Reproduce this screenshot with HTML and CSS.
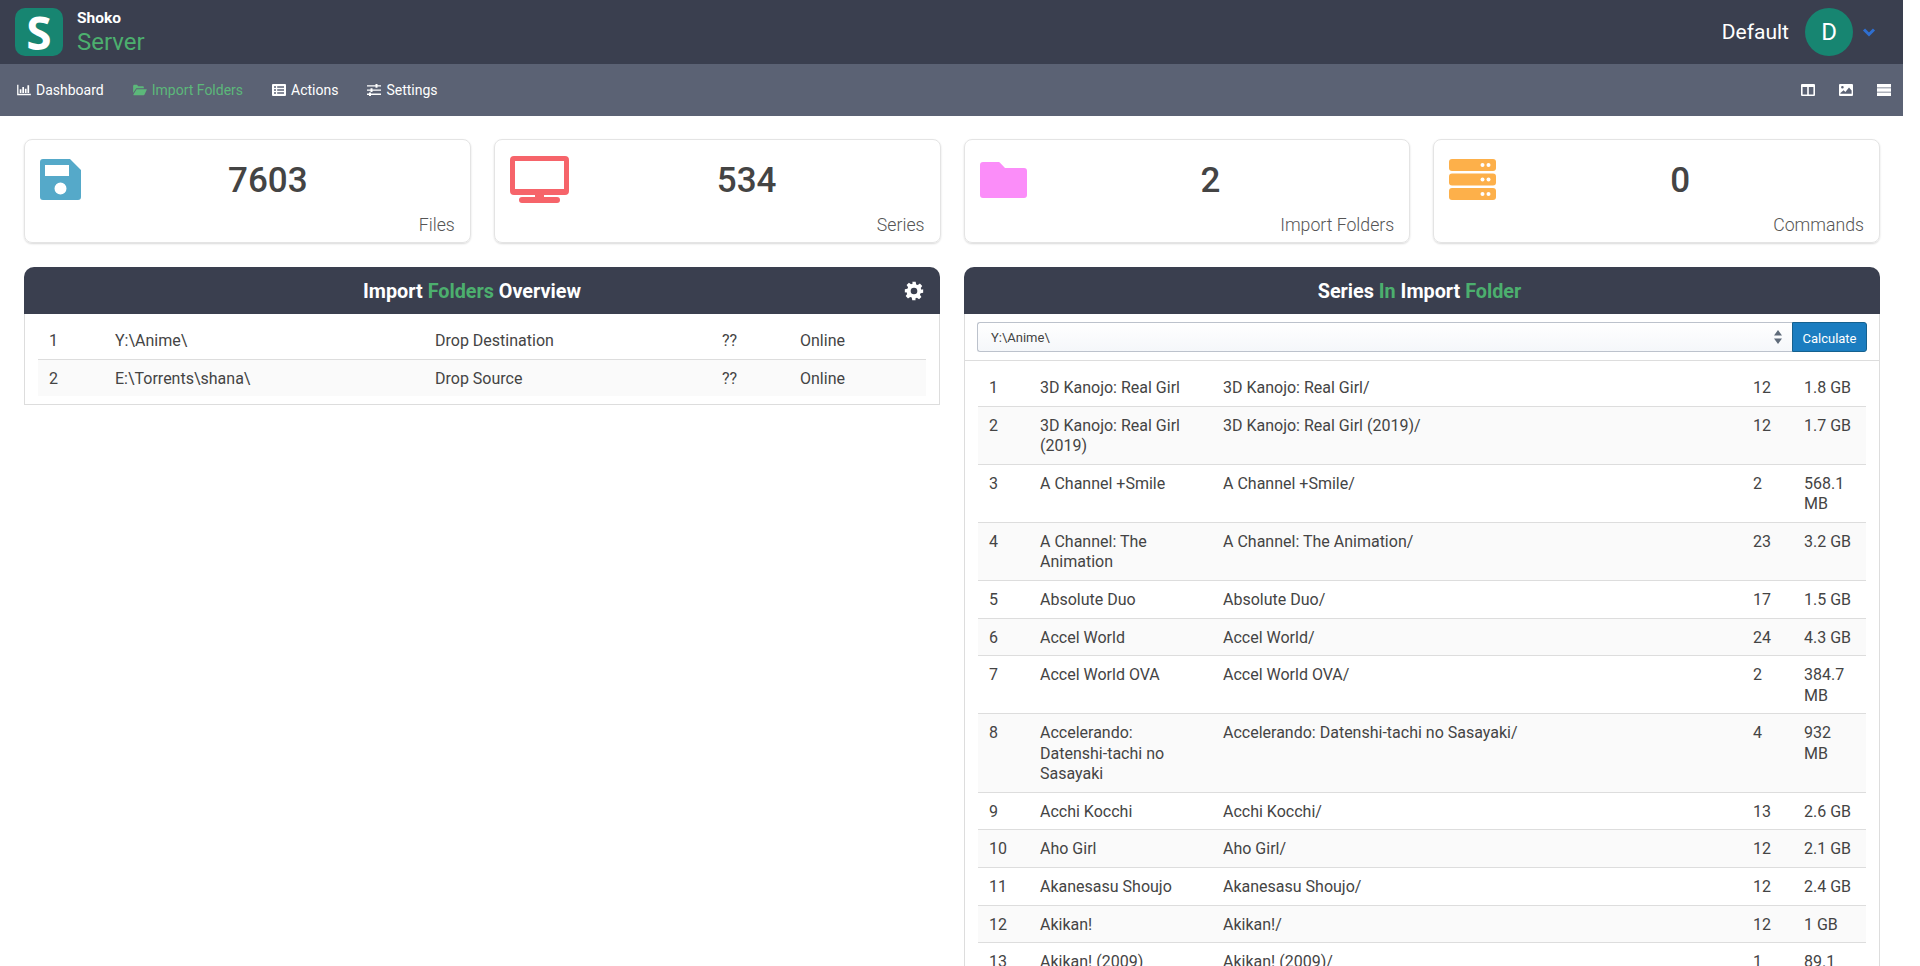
FILE: index.html
```html
<!DOCTYPE html>
<html>
<head>
    <title>Shoko Server</title>
    <link rel="stylesheet" href="styles.css">
</head>
<body>
    <div class="page">
        <header class="topbar">
            <div class="logo">S</div>
            <div class="brand">
                <div class="brand-top">Shoko</div>
                <div class="brand-bottom">Server</div>
            </div>
            <div class="user">
                <span class="user-name">Default</span>
                <span class="avatar">D</span>
                <svg class="chevron" viewBox="0 0 14 10"><path d="M2 2.5l5 5 5-5" fill="none" stroke="#2f6fd0" stroke-width="3"/></svg>
            </div>
        </header>

        <nav class="subnav">
            <a class="nav-item"><svg class="nav-icon" viewBox="0 0 16 14"><path d="M0 1h1.5v10.5H16V13H0z" fill="#fff"/><path d="M3 6h2v4.5H3zM6 3.5h2v7H6zM9 5.5h2v5H9zM12 1.5h2v9h-2z" fill="#fff"/></svg>Dashboard</a>
            <a class="nav-item active"><svg class="nav-icon" viewBox="0 0 16 14"><path d="M0 2.5C0 1.700.6 1 1.400 1h3.200l1.200 1.500h5.400c.7 0 1.300.6 1.300 1.300V5H3.600L0 10.500z" fill="#5cb87a"/><path d="M4 6h11.400c.5 0 .7.4.5.8l-2.600 5.400c-.2.4-.6.8-1.100.8H.8c-.5 0-.7-.4-.5-.8z" fill="#5cb87a"/></svg>Import Folders</a>
            <a class="nav-item"><svg class="nav-icon" viewBox="0 0 14 12"><path fill-rule="evenodd" d="M1 0h12a1 1 0 011 1v10a1 1 0 01-1 1H1a1 1 0 01-1-1V1a1 1 0 011-1zm1 2.200v1.600h2V2.200zm3.200 0v1.600h6.800V2.200zM2 5.200v1.600h2V5.200zm3.200 0v1.600h6.800V5.200zM2 8.200v1.600h2V8.200zm3.200 0v1.600h6.800V8.200z" fill="#fff"/></svg>Actions</a>
            <a class="nav-item"><svg class="nav-icon" viewBox="0 0 14 12"><path d="M0 1.200h14v1.300H0zM0 5.400h14v1.300H0zM0 9.600h14v1.300H0z" fill="#fff"/><path d="M8.500 0h2v3.700h-2zM3.500 4.200h2v3.700h-2zM2 8.400h2v3.600H2z" fill="#fff"/></svg>Settings</a>
            <div class="nav-right">
                <svg class="tool-icon" viewBox="0 0 14 12"><path fill-rule="evenodd" d="M1 0h12a1 1 0 011 1v10a1 1 0 01-1 1H1a1 1 0 01-1-1V1a1 1 0 011-1zm.6 3v7.400h4.600V3zm6.200 0v7.400h4.600V3z" fill="#fff"/></svg>
                <svg class="tool-icon" viewBox="0 0 14 12"><path fill-rule="evenodd" d="M1 0h12a1 1 0 011 1v10a1 1 0 01-1 1H1a1 1 0 01-1-1V1a1 1 0 011-1zm.4 9.800h11.200V6.400L10 3.400 6.400 8 4.600 6.200 1.400 9zM3.400 2a1.200 1.200 0 100 2.600 1.200 1.200 0 000-2.600z" fill="#fff"/></svg>
                <svg class="tool-icon" viewBox="0 0 14 12"><path d="M0 0h14v3.400H0zM0 4.300h14v3.400H0zM0 8.600h14v3.400H0z" fill="#fff"/></svg>
            </div>
        </nav>

        <main class="content">
            <section class="stats">
                <div class="stat">
                    <div class="stat-top">
                        <svg class="stat-icon icon-save" viewBox="0 0 41 41"><path fill-rule="evenodd" d="M3 0h27l11 11v27a3 3 0 01-3 3H3a3 3 0 01-3-3V3a3 3 0 013-3zm2 6v11h24V6zm15.500 17.500a6 6 0 100 12 6 6 0 000-12z" fill="#55a9c9"/></svg>
                        <div class="stat-num">7603</div>
                    </div>
                    <div class="stat-label">Files</div>
                </div>
                <div class="stat">
                    <div class="stat-top">
                        <svg class="stat-icon icon-tv" viewBox="0 0 59 47"><path fill-rule="evenodd" d="M4 0h51a4 4 0 014 4v31a4 4 0 01-4 4H34v2h13a3 3 0 010 6H12a3 3 0 010-6h13v-2H4a4 4 0 01-4-4V4a4 4 0 014-4zm1 5v28h49V5z" fill="#f6646a"/></svg>
                        <div class="stat-num">534</div>
                    </div>
                    <div class="stat-label">Series</div>
                </div>
                <div class="stat">
                    <div class="stat-top">
                        <svg class="stat-icon icon-folder" viewBox="0 0 47 36"><path d="M3 0h15c1 0 2 .4 2.500 1.200L25 6h19a3 3 0 013 3v24a3 3 0 01-3 3H3a3 3 0 01-3-3V3a3 3 0 013-3z" fill="#fb8df9"/></svg>
                        <div class="stat-num">2</div>
                    </div>
                    <div class="stat-label">Import Folders</div>
                </div>
                <div class="stat">
                    <div class="stat-top">
                        <svg class="stat-icon icon-server" viewBox="0 0 47 41"><g fill="#fdb04a"><rect width="47" height="12" rx="3"/><rect y="14.500" width="47" height="12" rx="3"/><rect y="29" width="47" height="12" rx="3"/></g><g fill="#fff"><circle cx="33.500" cy="6" r="2"/><circle cx="39.500" cy="6" r="2"/><circle cx="33.500" cy="20.500" r="2"/><circle cx="39.500" cy="20.500" r="2"/><circle cx="33.500" cy="35" r="2"/><circle cx="39.500" cy="35" r="2"/></g></svg>
                        <div class="stat-num">0</div>
                    </div>
                    <div class="stat-label">Commands</div>
                </div>
            </section>

            <section class="panels">
                <div class="panel panel-left">
                    <div class="panel-head">
                        <h2>Import <span class="green">Folders</span> Overview</h2>
                        <svg class="gear" viewBox="0 0 24 24"><path fill-rule="evenodd" d="M10 1h4l.6 3.100 1.900.8 2.600-1.800 2.800 2.800-1.800 2.600.8 1.900L23 10v4l-3.100.6-.8 1.900 1.800 2.600-2.800 2.800-2.600-1.800-1.900.8L13.900 23h-4l-.6-3.100-1.900-.8-2.600 1.800-2.800-2.800 1.800-2.600-.8-1.900L1 13.900v-4l3.100-.6.8-1.900L3.100 4.800l2.800-2.800 2.600 1.800 1.900-.8zM12 8a4 4 0 100 8 4 4 0 000-8z" fill="#fff"/></svg>
                    </div>
                    <div class="panel-body">
                        <table class="grid grid-folders">
                            <colgroup><col class="f1"><col class="f2"><col class="f3"><col class="f4"><col class="f5"></colgroup>
                            <tr><td>1</td><td>Y:\Anime\</td><td>Drop Destination</td><td>??</td><td>Online</td></tr>
                            <tr><td>2</td><td>E:\Torrents\shana\</td><td>Drop Source</td><td>??</td><td>Online</td></tr>
                        </table>
                    </div>
                </div>

                <div class="panel panel-right">
                    <div class="panel-head">
                        <h2>Series <span class="green">In</span> Import <span class="green">Folder</span></h2>
                    </div>
                    <div class="picker">
                        <div class="picker-select">
                            <span>Y:\Anime\</span>
                            <svg class="updown" viewBox="0 0 8 14"><path d="M4 0l4 5.500H0zM4 14L0 8.500h8z" fill="#5f6b7a"/></svg>
                        </div>
                        <button class="calc" type="button">Calculate</button>
                    </div>
                    <div class="panel-body">
                        <table class="grid grid-series">
                            <colgroup><col class="s1"><col class="s2"><col class="s3"><col class="s4"><col class="s5"></colgroup>
                            <tr><td>1</td><td>3D Kanojo: Real Girl</td><td>3D Kanojo: Real Girl/</td><td>12</td><td>1.8 GB</td></tr>
                            <tr><td>2</td><td>3D Kanojo: Real Girl (2019)</td><td>3D Kanojo: Real Girl (2019)/</td><td>12</td><td>1.7 GB</td></tr>
                            <tr><td>3</td><td>A Channel +Smile</td><td>A Channel +Smile/</td><td>2</td><td>568.1 MB</td></tr>
                            <tr><td>4</td><td>A Channel: The Animation</td><td>A Channel: The Animation/</td><td>23</td><td>3.2 GB</td></tr>
                            <tr><td>5</td><td>Absolute Duo</td><td>Absolute Duo/</td><td>17</td><td>1.5 GB</td></tr>
                            <tr><td>6</td><td>Accel World</td><td>Accel World/</td><td>24</td><td>4.3 GB</td></tr>
                            <tr><td>7</td><td>Accel World OVA</td><td>Accel World OVA/</td><td>2</td><td>384.7 MB</td></tr>
                            <tr><td>8</td><td>Accelerando: Datenshi-tachi no Sasayaki</td><td>Accelerando: Datenshi-tachi no Sasayaki/</td><td>4</td><td>932 MB</td></tr>
                            <tr><td>9</td><td>Acchi Kocchi</td><td>Acchi Kocchi/</td><td>13</td><td>2.6 GB</td></tr>
                            <tr><td>10</td><td>Aho Girl</td><td>Aho Girl/</td><td>12</td><td>2.1 GB</td></tr>
                            <tr><td>11</td><td>Akanesasu Shoujo</td><td>Akanesasu Shoujo/</td><td>12</td><td>2.4 GB</td></tr>
                            <tr><td>12</td><td>Akikan!</td><td>Akikan!/</td><td>12</td><td>1 GB</td></tr>
                            <tr><td>13</td><td>Akikan! (2009)</td><td>Akikan! (2009)/</td><td>1</td><td>89.1 MB</td></tr>
                        </table>
                    </div>
                </div>
            </section>
        </main>
    </div>
</body>
</html>
```

FILE: styles.css
```css
html, body {
    margin: 0;
    height: 966px;
    overflow: hidden;
    background-color: #ffffff;
}

body {
    font-family: Roboto, Arial, sans-serif;
    font-size: 16px;
    line-height: 20.57px;
    color: #444444;
}

.page {
    width: 1903px;
}

/* top bar */
.topbar {
    height: 64px;
    background-color: #3a3f4f;
    display: flex;
    align-items: center;
    padding: 0 50px 0 15px;
    box-sizing: border-box;
}

.logo {
    width: 48px;
    height: 48px;
    border-radius: 10px;
    background-color: #178571;
    color: #ffffff;
    font-family: "Open Sans", Arial, sans-serif;
    font-weight: 700;
    font-size: 46px;
    line-height: 48px;
    text-align: center;
}

.brand {
    margin-left: 14px;
}

.brand-top {
    color: #ffffff;
    font-size: 15.5px;
    font-weight: 700;
    line-height: 18px;
}

.brand-bottom {
    color: #4caf6e;
    font-size: 24px;
    font-weight: 400;
    line-height: 28px;
    margin-top: 1px;
}

.user {
    margin-left: auto;
    display: flex;
    align-items: center;
    position: relative;
}

.user-name {
    color: #ffffff;
    font-size: 21px;
    margin-right: 16px;
}

.avatar {
    width: 48px;
    height: 48px;
    border-radius: 50%;
    background-color: #178571;
    color: #ffffff;
    font-size: 24px;
    line-height: 48px;
    text-align: center;
}

.chevron {
    position: absolute;
    left: 100%;
    top: 19px;
    width: 14px;
    height: 10px;
    margin-left: 9px;
}

/* second bar */
.subnav {
    height: 52px;
    background-color: #5b6274;
    display: flex;
    align-items: center;
    padding: 0 12px 0 17px;
    box-sizing: border-box;
    font-size: 14px;
}

.nav-item {
    color: #ffffff;
    display: flex;
    align-items: center;
    margin-right: 29px;
}

.nav-item.active {
    color: #5cb87a;
}

.nav-icon {
    width: 14px;
    height: 12px;
    margin-right: 5px;
}

.nav-right {
    margin-left: auto;
    display: flex;
    gap: 24px;
}

.tool-icon {
    width: 14px;
    height: 12px;
}

/* content */
.content {
    padding: 23px 23px 0 24px;
}

.stats {
    display: grid;
    grid-template-columns: repeat(4, 1fr);
    column-gap: 23px;
    margin-bottom: 24px;
}

.stat {
    height: 104px;
    box-sizing: border-box;
    border: 1px solid #e4e4e4;
    border-radius: 8px;
    box-shadow: 0 1px 2px rgba(0, 0, 0, 0.15);
    padding: 15px 15px 0 15px;
}

.stat-top {
    display: flex;
    height: 50px;
    align-items: flex-start;
}

.stat-num {
    flex: 1;
    text-align: center;
    font-size: 35px;
    font-weight: 500;
    line-height: 50px;
    margin-top: 1px;
    color: #444444;
}

.stat-label {
    text-align: right;
    font-size: 17.7px;
    font-weight: 300;
    line-height: 24px;
    margin-top: 8px;
    color: #555555;
}

.stat-icon {
    display: block;
    flex: none;
}

.icon-save {
    width: 41px;
    height: 41px;
    margin-top: 4px;
}

.icon-tv {
    width: 59px;
    height: 47px;
    margin-top: 1px;
}

.icon-folder {
    width: 47px;
    height: 36px;
    margin-top: 7px;
}

.icon-server {
    width: 47px;
    height: 41px;
    margin-top: 4px;
}

/* panels */
.panels {
    display: grid;
    grid-template-columns: 1fr 1fr;
    column-gap: 24px;
    align-items: start;
}

.panel {
    border: 1px solid #dddddd;
    border-top: none;
    border-radius: 10px 10px 0 0;
}

.panel-head {
    height: 47px;
    margin: 0 -1px;
    padding-top: 3px;
    box-sizing: border-box;
    background-color: #3a3f4f;
    border-radius: 10px 10px 0 0;
    display: flex;
    align-items: center;
    justify-content: center;
    position: relative;
}

.panel-left .panel-head {
    padding-right: 20px;
}

.panel-right .panel-head {
    padding-right: 5px;
}

.panel-head h2 {
    margin: 0;
    color: #ffffff;
    font-size: 19.8px;
    font-weight: 700;
}

.green {
    color: #4caf6e;
}

.gear {
    position: absolute;
    right: 16px;
    top: 14px;
    width: 20px;
    height: 20px;
}

.panel-body {
    padding: 8px 13px;
}

.panel-right .panel-body {
    padding-bottom: 0;
    border-top: 1px solid #dddddd;
}

.picker {
    display: flex;
    margin: 8px 12px;
    height: 30px;
}

.picker-select {
    flex: 1;
    display: flex;
    align-items: center;
    justify-content: space-between;
    box-sizing: border-box;
    padding: 2px 14px 0 13px;
    font-size: 13px;
    color: #444444;
    background: linear-gradient(#ffffff, #f5f7fa);
    border: 1px solid #bcc2cc;
    border-right: none;
    border-radius: 3px 0 0 3px;
}

.updown {
    width: 8px;
    height: 14px;
    margin-right: -4px;
    margin-top: -2px;
}

.calc {
    width: 75px;
    height: 30px;
    padding: 2px 0 0;
    box-sizing: border-box;
    background-color: #1b7dc0;
    color: #ffffff;
    border: 1px solid #15618f;
    border-radius: 0 3px 3px 0;
    font-family: Roboto, Arial, sans-serif;
    font-size: 13px;
}

/* tables */
.grid {
    width: 100%;
    table-layout: fixed;
    border-collapse: collapse;
}

.grid td {
    padding: 9px 12px 7px 11px;
    vertical-align: top;
    border-top: 1px solid #dddddd;
}

.grid tr:first-child td {
    border-top: none;
}

.grid tr:nth-child(even) td {
    background-color: #fafafa;
}

.f1 { width: 66px; }
.f2 { width: 320px; }
.f3 { width: 287px; }
.f4 { width: 78px; }

.s1 { width: 51px; }
.s2 { width: 183px; }
.s4 { width: 51px; }
.s5 { width: 73px; }
```
